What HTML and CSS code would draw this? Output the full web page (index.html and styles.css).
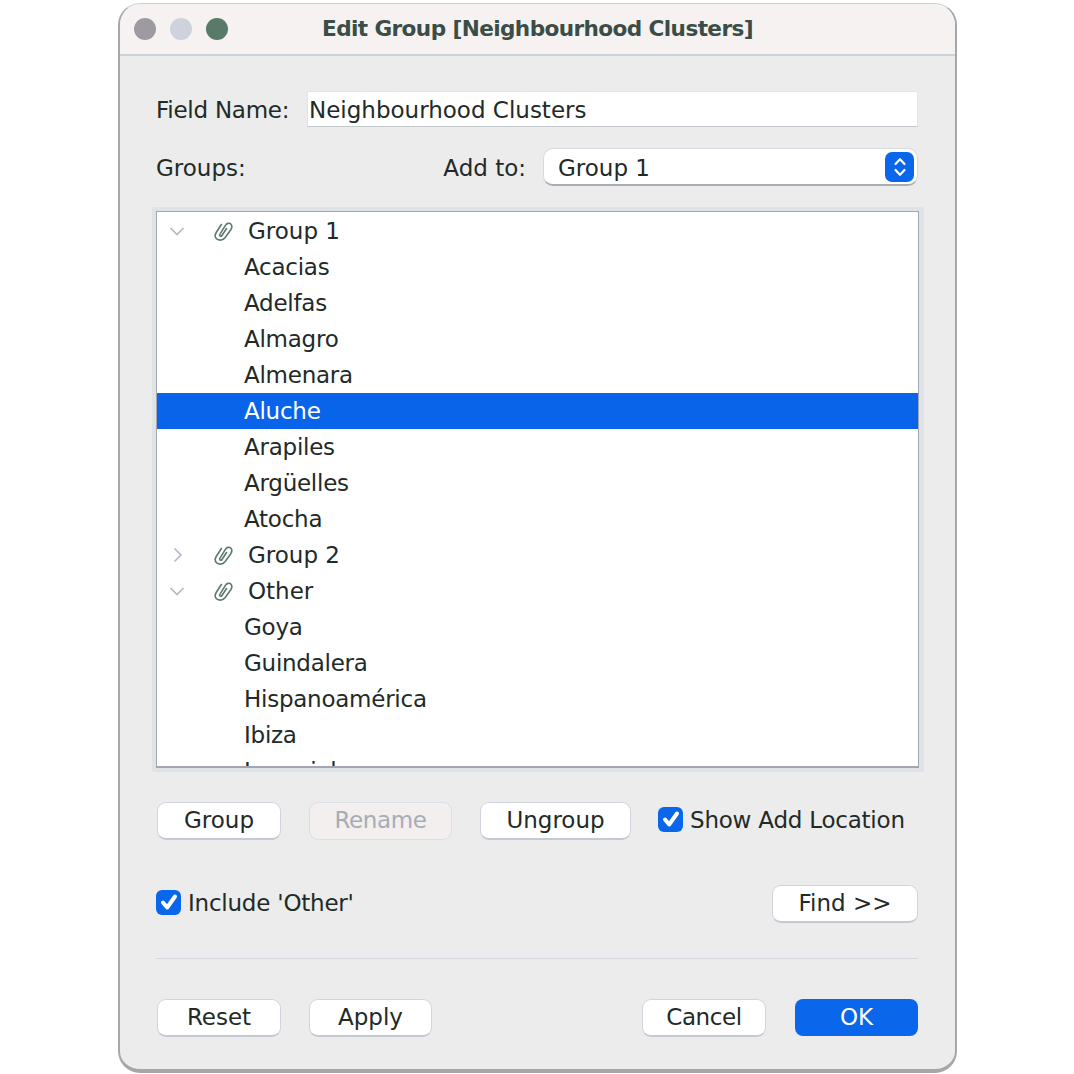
FILE: index.html
```html
<!DOCTYPE html>
<html lang="en">
<head>
<meta charset="utf-8">
<title>Edit Group [Neighbourhood Clusters]</title>
<link rel="stylesheet" href="styles.css">
</head>
<body>
<svg class="defs" width="0" height="0" aria-hidden="true">
  <symbol id="clip" viewBox="0 0 20 20">
    <path d="M13.5 7.5 9 14.5C8 16 6 15 7 13.2L12.4 4.4C13.8 2.2 16.4 1.6 17.8 3C19.2 4.4 19 6.8 17.6 9L12 16.8C10 19.4 6.4 19.8 4 18.2C2 16.6 1.8 13.8 3.2 11.5L8.4 3.5" fill="none" stroke="#5b7a6e" stroke-width="1.6" stroke-linecap="round" stroke-linejoin="round"/>
  </symbol>
  <symbol id="check" viewBox="0 0 24 24">
    <path d="M6 12.5 10.2 17.5 18 6.5" fill="none" stroke="#fff" stroke-width="4" stroke-linecap="round" stroke-linejoin="round"/>
  </symbol>
</svg>
<div class="window">
  <header class="titlebar">
    <div class="lights">
      <span class="light light-close"></span>
      <span class="light light-min"></span>
      <span class="light light-max"></span>
    </div>
    <h1 class="title">Edit Group [Neighbourhood Clusters]</h1>
  </header>
  <main class="content">
    <div class="field-row">
      <label class="label">Field Name:</label>
      <div class="input">Neighbourhood Clusters</div>
    </div>
    <div class="groups-row">
      <span class="label">Groups:</span>
      <span class="label add-to">Add to:</span>
      <div class="select">
        <span class="select-text">Group 1</span>
        <span class="stepper">
          <svg width="16" height="26" viewBox="0 0 16 26"><path d="M3.5 10 8 5.2 12.5 10M3.5 16 8 20.8 12.5 16" fill="none" stroke="#fff" stroke-width="2.2" stroke-linecap="round" stroke-linejoin="round"/></svg>
        </span>
      </div>
    </div>
    <div class="list-frame">
      <div class="list">
        <div class="row group-row">
          <svg class="chev" width="18" height="12" viewBox="0 0 18 12"><path d="M2.5 3 9 9.5 15.5 3" fill="none" stroke="#b4bac4" stroke-width="1.7"/></svg>
          <svg class="clip"><use href="#clip"/></svg>
          <span>Group 1</span>
        </div>
        <div class="row item">Acacias</div>
        <div class="row item">Adelfas</div>
        <div class="row item">Almagro</div>
        <div class="row item">Almenara</div>
        <div class="row item selected">Aluche</div>
        <div class="row item">Arapiles</div>
        <div class="row item">Argüelles</div>
        <div class="row item">Atocha</div>
        <div class="row group-row">
          <svg class="chev chev-right" width="18" height="18" viewBox="0 0 18 18"><path d="M5.5 2.5 12 9 5.5 15.5" fill="none" stroke="#b4bac4" stroke-width="1.7"/></svg>
          <svg class="clip"><use href="#clip"/></svg>
          <span>Group 2</span>
        </div>
        <div class="row group-row">
          <svg class="chev" width="18" height="12" viewBox="0 0 18 12"><path d="M2.5 3 9 9.5 15.5 3" fill="none" stroke="#b4bac4" stroke-width="1.7"/></svg>
          <svg class="clip"><use href="#clip"/></svg>
          <span>Other</span>
        </div>
        <div class="row item">Goya</div>
        <div class="row item">Guindalera</div>
        <div class="row item">Hispanoamérica</div>
        <div class="row item">Ibiza</div>
        <div class="row item">Imperial</div>
      </div>
    </div>
    <div class="actions-row">
      <button class="btn btn-group">Group</button>
      <button class="btn btn-rename" disabled>Rename</button>
      <button class="btn btn-ungroup">Ungroup</button>
      <span class="check-label check-show"><span class="checkbox"><svg width="24" height="24"><use href="#check"/></svg></span>Show Add Location</span>
    </div>
    <div class="include-row">
      <span class="check-label"><span class="checkbox"><svg width="24" height="24"><use href="#check"/></svg></span>Include 'Other'</span>
      <button class="btn btn-find">Find &gt;&gt;</button>
    </div>
    <hr class="divider">
    <div class="footer-row">
      <button class="btn btn-group">Reset</button>
      <button class="btn btn-apply">Apply</button>
      <button class="btn btn-cancel">Cancel</button>
      <button class="btn btn-ok">OK</button>
    </div>
  </main>
</div>
</body>
</html>
```
FILE: styles.css
```css
* { box-sizing: border-box; }
html, body { margin: 0; padding: 0; background: #fff; }
body {
  width: 1074px;
  height: 1074px;
  overflow: hidden;
  padding: 3px 0 0 118px;
  font-family: "DejaVu Sans", sans-serif;
  font-size: 23px;
  color: #222a28;
}
.defs { position: absolute; }
.window {
  width: 839px;
  height: 1070px;
  background: #ececec;
  border: 1px solid #c9ced8;
  border-right: 2px solid #a5a5aa;
  border-bottom: 4px solid #a5a5aa;
  border-left: 2px solid #a8a8ac;
  border-radius: 22px;
  overflow: hidden;
  display: flex;
  flex-direction: column;
}
.titlebar {
  height: 52px;
  flex: none;
  display: flex;
  align-items: center;
  justify-content: center;
  position: relative;
  background: #f7f2f2;
  border-bottom: 2px solid #cdd2da;
}
.lights {
  position: absolute;
  left: 14px;
  top: 14px;
  display: flex;
  gap: 14px;
}
.light { width: 22px; height: 22px; border-radius: 50%; }
.light-close { background: #9d9ba1; }
.light-min { background: #cdd2dc; }
.light-max { background: #5a7a69; }
.title {
  margin: 0 0 2px;
  font-size: 21.6px;
  font-weight: bold;
  color: #3a4d46;
  letter-spacing: -0.6px;
}
.content {
  flex: 1;
  padding: 35px 37px 0 36px;
  display: flex;
  flex-direction: column;
}
.label { white-space: nowrap; padding-top: 2px; }
.field-row {
  display: flex;
  align-items: center;
  height: 36px;
}
.field-row .label { width: 151px; flex: none; letter-spacing: -0.25px; }
.input {
  flex: 1;
  height: 36px;
  background: #fff;
  border: 1px solid #e0e3e8;
  border-bottom-color: #c4c8cf;
  padding-left: 1px;
  line-height: 36px;
}
.groups-row {
  display: flex;
  align-items: center;
  height: 38px;
  margin-top: 21px;
}
.add-to { margin-left: auto; margin-right: 17px; }
.select {
  width: 375px;
  height: 38px;
  flex: none;
  background: #fff;
  border-radius: 10px;
  border: 1px solid #d6dae2;
  border-bottom: 2px solid #a9adb4;
  display: flex;
  align-items: center;
  justify-content: space-between;
  padding: 0 3px 0 14px;
}
.select-text { padding-top: 2px; }
.stepper {
  width: 29px;
  height: 30px;
  border-radius: 7px;
  background: #0a66ea;
  display: flex;
  align-items: center;
  justify-content: center;
}
.list-frame {
  margin: 21px -6px 0 -4px;
  height: 565px;
  padding: 4px 5px 4px 4px;
  background: #dfe2e7;
  border-radius: 3px;
}
.list {
  height: 557px;
  background: #fff;
  border: 1px solid #a2a6ae;
  border-width: 1px 1px 2px 1px;
  overflow: hidden;
  padding-top: 1px;
}
.row {
  height: 36px;
  display: flex;
  align-items: center;
  white-space: nowrap;
}
.item { padding-left: 87px; letter-spacing: -0.25px; }
.selected { background: #0a64e9; color: #fff; }
.group-row { position: relative; padding-left: 91px; }
.chev { position: absolute; left: 11px; top: 50%; transform: translateY(-50%); }
.chev-right { left: 12px; }
.clip { position: absolute; left: 56px; top: 8px; width: 20px; height: 20px; }
.actions-row {
  display: flex;
  align-items: center;
  height: 38px;
  margin-top: 30px;
}
.btn {
  font: inherit;
  color: inherit;
  height: 38px;
  padding: 0 0 2px;
  background: #fff;
  border: 1px solid #cfd4dd;
  border-bottom: 2px solid #c4c9d2;
  border-radius: 9px;
  flex: none;
}
.btn-group { width: 124px; margin-left: 1px; }
.btn-rename {
  width: 143px;
  margin-left: 28px;
  background: #f3efef;
  color: #a8acb4;
  border: 1px solid #dcdfe5;
  letter-spacing: -0.4px;
}
.btn-ungroup { width: 151px; margin-left: 28px; }
.checkbox {
  width: 25px;
  height: 25px;
  border-radius: 6px;
  background: #0a66ea;
  display: inline-flex;
  align-items: center;
  justify-content: center;
  margin: 0 7px 2px 0;
  flex: none;
}
.check-label {
  display: inline-flex;
  align-items: center;
  white-space: nowrap;
  letter-spacing: -0.22px;
  padding-bottom: 2px;
}
.check-show { margin-left: 27px; }
.include-row {
  display: flex;
  align-items: center;
  justify-content: space-between;
  height: 38px;
  margin-top: 45px;
}
.btn-find { width: 146px; }
.divider {
  border: 0;
  border-top: 1px solid #d4d7dd;
  margin: 35px 0 0;
  width: 100%;
}
.footer-row {
  display: flex;
  align-items: flex-start;
  height: 38px;
  margin-top: 40px;
}
.btn-apply { width: 123px; margin-left: 28px; }
.btn-cancel { width: 124px; margin-left: auto; letter-spacing: -0.4px; }
.btn-ok {
  width: 123px;
  margin-left: 29px;
  background: #0a66ea;
  color: #fff;
  border: 0;
  height: 37px;
  border-radius: 8px;
}
```
